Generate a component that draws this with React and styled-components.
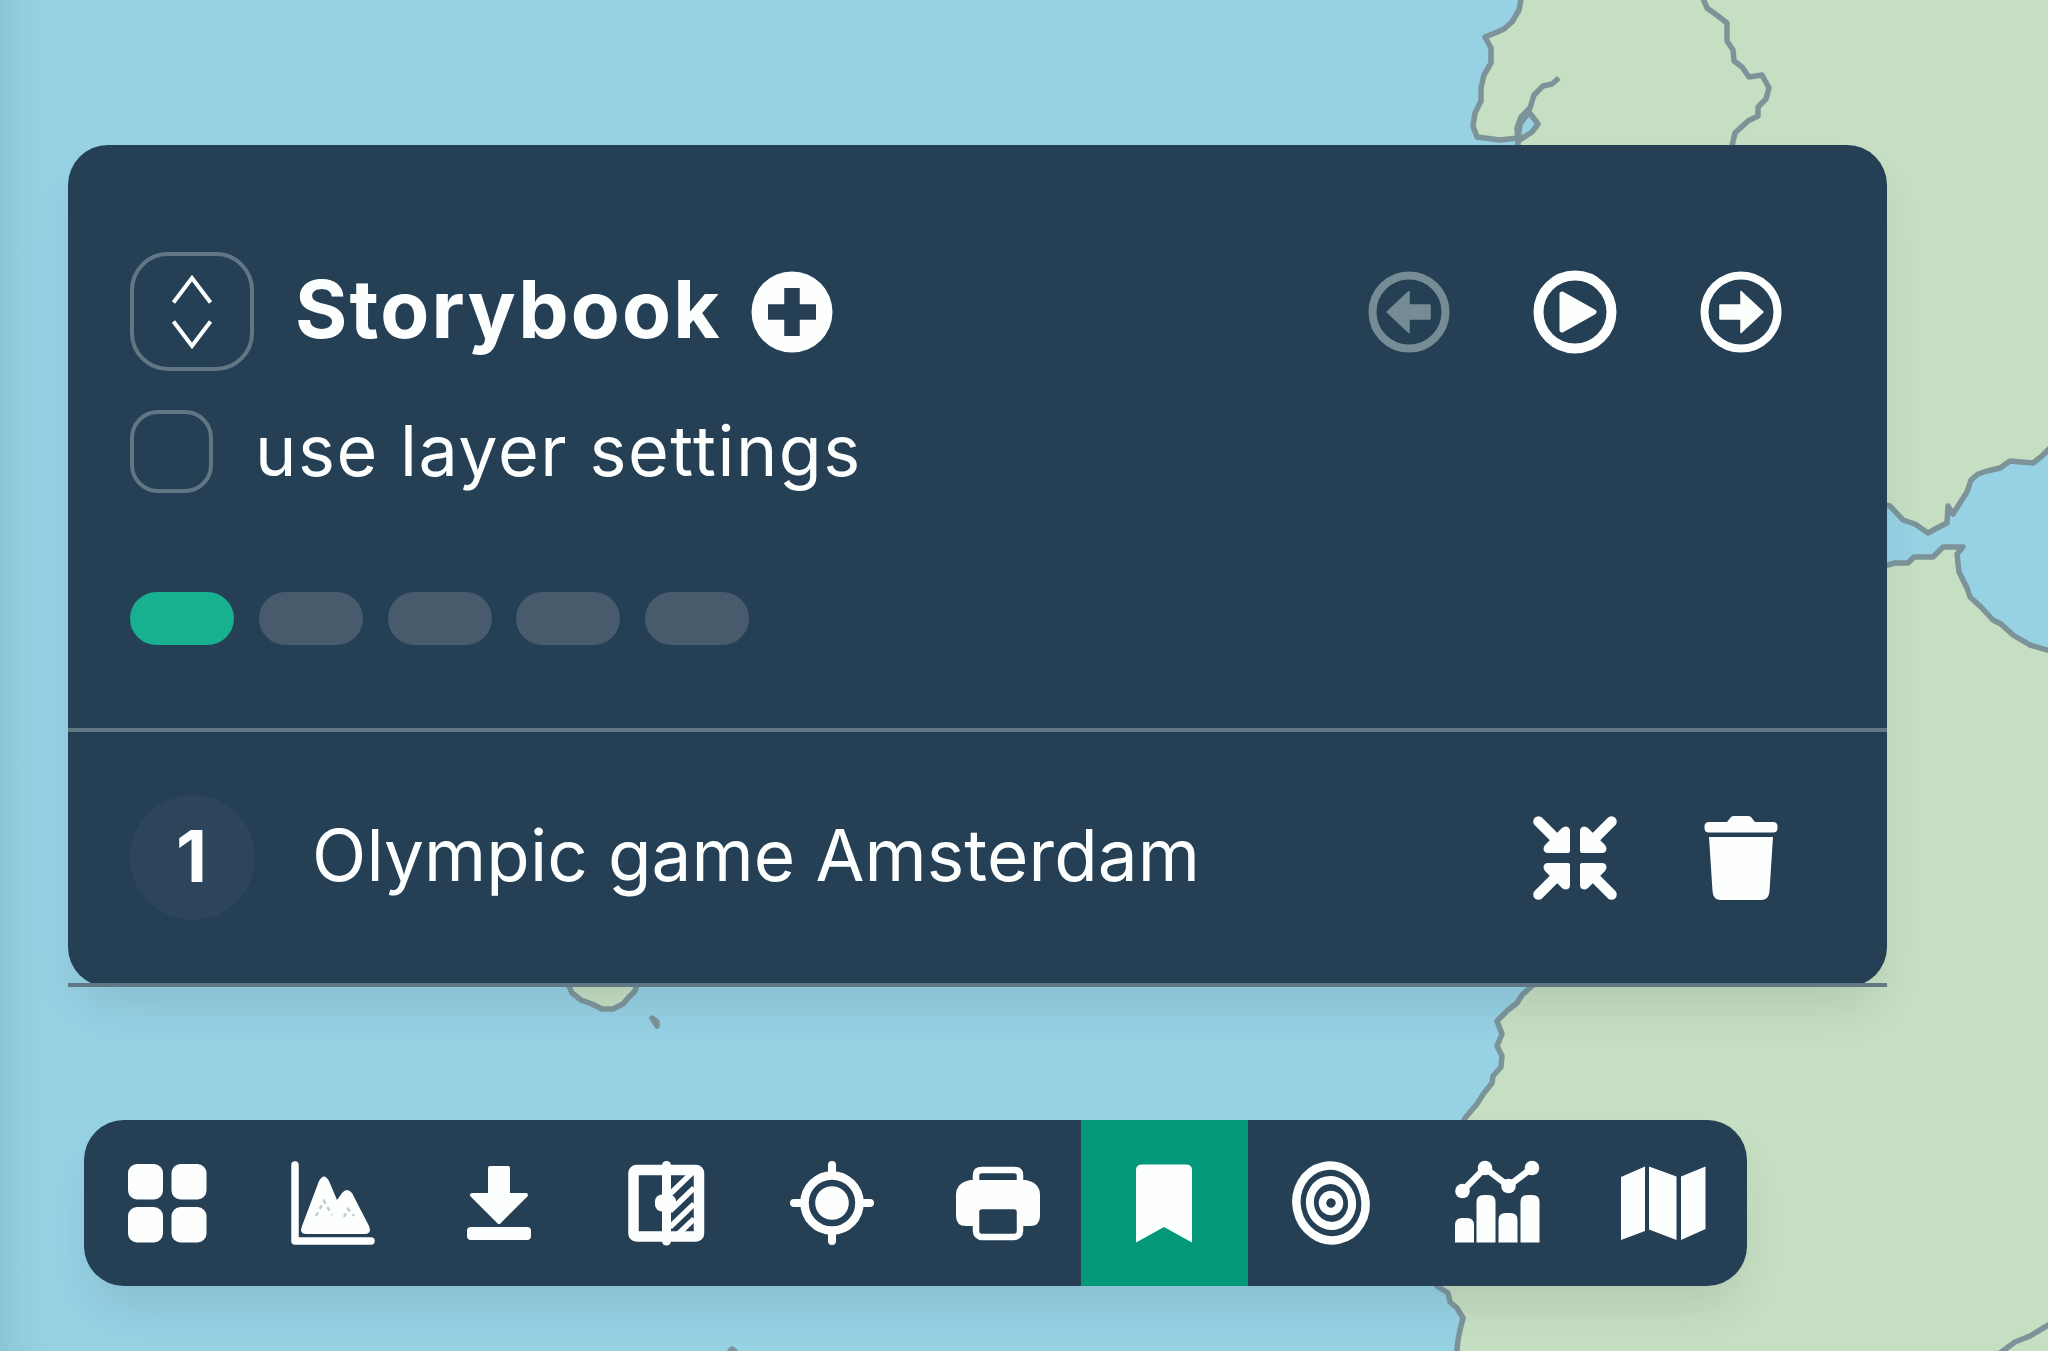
import React from "react"
import styled, { createGlobalStyle, css } from "styled-components"

/** COLORS **/
const NAVY = "#253f54"
const SEA = "#96d1e4"
const LAND = "#c6dec1"
const COAST = "#7c9499"
const LINE = "#627784"
const WHITE = "#fdffff"
const FADED = "#758c95"
const ACTIVE = "#04987b"
const STEP_ACTIVE = "#17b091"
const STEP = "#475b6c"
const BADGE = "#2d455b"

const SHADOW = "0 28px 44px -10px rgba(60, 90, 100, 0.15)"

const GlobalStyle = createGlobalStyle`
  html,
  body {
    margin: 0;
    padding: 0;
  }

  * {
    box-sizing: border-box;
  }
`

/** PAGE **/
const Page = styled.main`
  position: relative;
  display: flex;
  flex-direction: column;
  align-items: flex-start;
  gap: 132px;
  width: 2048px;
  height: 1351px;
  padding: 145px 0 0 68px;
  overflow: hidden;
  background-color: ${SEA};
  color: ${WHITE};
  font-family: Inter, "Liberation Sans", sans-serif;
`

const MapCanvas = styled.svg`
  position: absolute;
  inset: 0;
  width: 100%;
  height: 100%;
`

/** STORYBOOK PANEL **/
const Panel = styled.section`
  position: relative;
  width: 1819px;
  height: 842px;
  border-radius: 40px;
  background-color: ${NAVY};
  box-shadow: ${SHADOW};
`

const PanelHeader = styled.header`
  height: 587px;
  padding: 107px 104px 0 62px;
  border-bottom: 4px solid ${LINE};
`

const HeaderRow = styled.div`
  display: flex;
  align-items: center;
  height: 119px;
`

const IconButton = styled.button`
  display: flex;
  padding: 0;
  border: none;
  background: none;
  color: ${props => (props.$faded ? FADED : WHITE)};
`

const SortButton = styled.button`
  display: flex;
  justify-content: center;
  align-items: center;
  width: 124px;
  height: 119px;
  padding: 0;
  border: 4px solid ${LINE};
  border-radius: 38px;
  background: none;
  color: ${WHITE};
`

const Title = styled.h1`
  width: 424px;
  margin: 0 31px 0 41px;
  padding-bottom: 5px;
  font-size: 80px;
  font-weight: 700;
  line-height: 114px;
  letter-spacing: 2.2px;
  white-space: nowrap;
`

const Actions = styled.div`
  display: flex;
  align-items: center;
  gap: 82px;
  margin-left: auto;
`

const SettingRow = styled.label`
  display: flex;
  align-items: center;
  gap: 42px;
  height: 83px;
  margin-top: 39px;
`

const Checkbox = styled.input`
  appearance: none;
  width: 83px;
  height: 83px;
  margin: 0;
  border: 4px solid ${LINE};
  border-radius: 28px;
`

const SettingText = styled.span`
  padding-bottom: 2px;
  font-size: 70px;
  line-height: 83px;
  letter-spacing: 1.55px;
  white-space: nowrap;
`

const Steps = styled.div`
  display: flex;
  gap: 24.8px;
  margin-top: 99px;
`

const StepPill = styled.span`
  width: 104px;
  height: 53px;
  border-radius: 27px;
  background-color: ${props => (props.$active ? STEP_ACTIVE : STEP)};
`

const StoryRow = styled.div`
  display: flex;
  align-items: center;
  height: 255px;
  padding: 0 104px 0 62px;
  border-bottom: 4px solid ${LINE};
`

const Badge = styled.span`
  display: flex;
  justify-content: center;
  align-items: center;
  width: 125px;
  height: 125px;
  padding: 0 2px 5px 0;
  border-radius: 50%;
  background-color: ${BADGE};
  font-size: 72px;
  font-weight: 700;
`

const StoryName = styled.span`
  margin-left: 57px;
  padding-bottom: 6px;
  font-size: 71px;
  line-height: 90px;
  letter-spacing: 0.1px;
  white-space: nowrap;
`

/** TOOLBAR **/
const Toolbar = styled.nav`
  position: relative;
  display: flex;
  width: 1663px;
  height: 166px;
  margin: 1px 0 0 15.5px;
  border-radius: 40px;
  background-color: ${NAVY};
  box-shadow: ${SHADOW};
`

const ToolButton = styled.button`
  display: flex;
  flex: 1;
  justify-content: center;
  align-items: center;
  padding: 0;
  border: none;
  background: none;
  color: ${WHITE};

  ${props =>
    props.$active &&
    css`
      background-color: ${ACTIVE};
    `}
`

/** ICONS **/
const Icon = ({ size = 84, children }) => (
  <svg
    width={size}
    height={size}
    viewBox={`${-size / 2} ${-size / 2} ${size} ${size}`}
    fill="currentColor"
    overflow="visible"
  >
    {children}
  </svg>
)

const SortIcon = () => (
  <Icon>
    <path
      d="M-18.500-9.500L0-34L18.500-9.500M-18.500 9.500L0 34L18.500 9.500"
      fill="none"
      stroke="currentColor"
      strokeWidth="4"
    />
  </Icon>
)

const AddIcon = () => (
  <Icon>
    <circle r="40.500" />
    <path d="M-24 0H24M0-24V24" stroke={NAVY} strokeWidth="15.500" />
  </Icon>
)

const ArrowIcon = ({ flip }) => (
  <Icon>
    <circle r="36.500" fill="none" stroke="currentColor" strokeWidth="8" />
    <path
      d="M-21-7H0V-20.500L22 0L0 20.500V7H-21Z"
      transform={flip ? "scale(-1 1)" : undefined}
      stroke="currentColor"
      strokeWidth="1.500"
      strokeLinejoin="round"
    />
  </Icon>
)

const PlayIcon = () => (
  <Icon>
    <circle r="36.500" fill="none" stroke="currentColor" strokeWidth="10" />
    <path
      d="M-13-18L19 0L-13 18Z"
      stroke="currentColor"
      strokeWidth="5"
      strokeLinejoin="round"
    />
  </Icon>
)

const CORNERS = ["1 1", "-1 1", "1 -1", "-1 -1"]

const MinimizeIcon = () => (
  <Icon>
    {CORNERS.map(scale => (
      <g key={scale} transform={`scale(${scale})`}>
        <path d="M-5-7V-27Q-5-31-9-31.500Q-11-31.500-13-30L-17.500-25.500L-25.500-17.500L-30-13Q-31.500-11-31.500-9Q-31-5-27-5H-7Q-5-5-5-7Z" />
        <path
          d="M-36.500-36.500L-18-18"
          stroke="currentColor"
          strokeWidth="10.500"
          strokeLinecap="round"
        />
      </g>
    ))}
  </Icon>
)

const TrashIcon = () => (
  <Icon>
    <path d="M-14-36L-10-41Q-9-42-7-42H7Q9-42 10-41L14-36H32Q36.500-36 36.500-31.500V-30Q36.500-25.500 32-25.500H-32Q-36.500-25.500-36.500-30V-31.500Q-36.500-36-32-36Z" />
    <path d="M-32-21H32L28.500 33Q28 42 20 42H-20Q-28 42-28.500 33Z" />
  </Icon>
)

const GridIcon = () => (
  <Icon>
    <rect x="-39" y="-39" width="35" height="35.500" rx="9" />
    <rect x="4.500" y="-39" width="35" height="35.500" rx="9" />
    <rect x="-39" y="4" width="35" height="35.500" rx="9" />
    <rect x="4.500" y="4" width="35" height="35.500" rx="9" />
  </Icon>
)

const TerrainIcon = () => (
  <Icon>
    <path
      d="M-38-38V38H38"
      fill="none"
      stroke="currentColor"
      strokeWidth="7.500"
      strokeLinecap="round"
      strokeLinejoin="round"
    />
    <path d="M-31 23L-14-22Q-9-31-4-22L4-3L9-10Q14-16 19-10L36 23Q39 31 32 31H-27Q-34 31-31 23Z" />
    <path
      d="M-17 13L-9-2L-1 12M11 14L15 6L21 13"
      fill="none"
      stroke="#bccbce"
      strokeWidth="2.500"
      strokeDasharray="4 4"
    />
  </Icon>
)

const DownloadIcon = () => (
  <Icon>
    <path
      d="M-9-35H9V-8H27L0 19L-27-8H-9Z"
      stroke="currentColor"
      strokeWidth="4"
      strokeLinejoin="round"
    />
    <rect x="-32" y="24" width="64" height="13" rx="4" />
  </Icon>
)

const CompareIcon = () => (
  <Icon>
    <rect
      x="-32.500"
      y="-33"
      width="65.500"
      height="66.500"
      rx="3"
      fill="none"
      stroke="currentColor"
      strokeWidth="10.500"
    />
    <rect x="-4" y="-42" width="9" height="84.500" rx="4.500" />
    <rect x="-11" y="-8.500" width="21" height="17" rx="7" />
    <path
      d="M4-9L28-32M4 8L28-15M4 24L28 1M8 35L28 16"
      stroke="currentColor"
      strokeWidth="5.500"
    />
  </Icon>
)

const LocateIcon = () => (
  <Icon>
    <circle r="27.500" fill="none" stroke="currentColor" strokeWidth="8.500" />
    <circle r="16.800" />
    <path
      d="M0-38V-30M0 38V30M-38 0H-30M38 0H30"
      stroke="currentColor"
      strokeWidth="8"
      strokeLinecap="round"
    />
  </Icon>
)

const PrintIcon = () => (
  <Icon>
    <path
      d="M-22-20V-28Q-22-33-16-33H16Q22-33 22-28V-20"
      fill="none"
      stroke="currentColor"
      strokeWidth="6.500"
    />
    <path d="M-28-23H28Q42-20 42-8V13Q42 23 32 23H-32Q-42 23-42 13V-8Q-42-20-28-23Z" />
    <rect
      x="-22"
      y="3"
      width="44"
      height="31"
      rx="6"
      fill={NAVY}
      stroke="currentColor"
      strokeWidth="6.500"
    />
  </Icon>
)

const BookmarkIcon = () => (
  <Icon>
    <path d="M-28-33Q-28-38.500-22-38.500H22Q28-38.500 28-33V39.500L0 24L-28 39.500Z" />
  </Icon>
)

const TargetIcon = () => (
  <Icon>
    <g transform="rotate(-12)" fill="none" stroke="currentColor">
      <ellipse rx="34.500" ry="37.500" strokeWidth="8.500" />
      <ellipse rx="21" ry="23" strokeWidth="8" />
      <circle r="8.500" strokeWidth="7.500" />
    </g>
  </Icon>
)

const TREND_POINTS = [
  [-34.5, -12],
  [-12, -35],
  [11.5, -17],
  [35, -35],
]

const ChartIcon = () => (
  <Icon>
    <path
      d="M-34.500-12L-12-35L11.500-17L35-35"
      fill="none"
      stroke="currentColor"
      strokeWidth="6.500"
    />
    {TREND_POINTS.map(([x, y]) => (
      <circle key={x} cx={x} cy={y} r="7.300" />
    ))}
    <path d="M-42 39.500V22Q-42 15-35 15H-30Q-23 15-23 22V39.500Z" />
    <path d="M-20.500 39.500V-1Q-20.500-8-13.500-8H-8.500Q-1.500-8-1.500-1V39.500Z" />
    <path d="M1.500 39.500V17Q1.500 10 8.500 10H13.500Q20.500 10 20.500 17V39.500Z" />
    <path d="M23.500 39.500V-1Q23.500-8 30.500-8H35.500Q42.500-8 42.500-1V39.500Z" />
  </Icon>
)

const MapIcon = () => (
  <Icon>
    <path d="M-42-26L-18-36.500V28L-42 37Z" />
    <path d="M-14-36.500L13.500-26.500V37L-14 26.500Z" />
    <path d="M18-26.500L42.500-36.500V26L18 37Z" />
  </Icon>
)

/** MAP **/
const EUROPE =
  "M1522-6L1519 10L1512 22L1504 29L1495 33L1485 37L1491 48L1491 63L1484 75L1481 88L1481 101L1475 113L1473 126L1477 137L1500 140L1518 138L1518 160V520H1870V502L1890 506L1903 520L1915 524L1928 533L1939 527L1947 523L1948 506L1953 514L1958 506L1967 492L1971 480L1978 474L1987 471L2000 468L2010 461L2033 463L2042 456L2054 444V-6Z"
const AFRICA =
  "M1880 567L1895 563L1908 563L1914 557L1933 557L1943 547L1963 547L1957 554L1959 572L1967 588L1970 597L1981 607L1993 620L2001 624L2013 635L2030 645L2054 652V1360H1456L1458 1340L1460 1330L1463 1318L1457 1308L1450 1302L1448 1293L1437 1286L1430 1200L1465 1118L1477 1104L1484 1093L1492 1083L1493 1076L1501 1067L1502 1056L1497 1046L1502 1034L1497 1021L1508 1010L1517 1003L1522 995L1532 986L1700 700Z"
const BORDERS = [
  "M1702-4L1707 8L1718 16L1727 23L1727 41L1733 50L1734 61L1742 67L1749 77L1762 75L1769 88L1766 99L1758 107L1758 116L1748 121L1735 133L1731 150",
  "M1559 78L1552 84L1543 86L1534 95L1530 108L1521 117L1517 128L1518 140",
  "M2000 1353L2015 1342L2030 1336L2050 1324",
]

const MapBackground = () => (
  <MapCanvas viewBox="0 0 2048 1351">
    <defs>
      <linearGradient id="edge" x1="0" x2="1">
        <stop offset="0" stopColor="#84bfd0" stopOpacity="0.6" />
        <stop offset="0.4" stopColor="#8ac6d8" stopOpacity="0.35" />
        <stop offset="1" stopColor={SEA} stopOpacity="0" />
      </linearGradient>
    </defs>
    <g stroke={COAST} strokeWidth="5.500" strokeLinejoin="round">
      <path d={EUROPE} fill={LAND} />
      <path d={AFRICA} fill={LAND} />
      <path d="M1529 112L1538 124L1532 132L1518 141L1520 124Z" fill={SEA} />
      <path
        d="M568 984L572 993L581 1000L592 1004L602 1009L613 1009L623 1004L629 997L635 991L637 984Z"
        fill={LAND}
      />
      <path d="M652 1018L657 1022L657 1026Z" fill={COAST} />
      <path d="M729 1352L732 1349L736 1352" fill={COAST} />
      {BORDERS.map(d => (
        <path key={d} d={d} fill="none" />
      ))}
    </g>
    <rect width="60" height="1351" fill="url(#edge)" />
  </MapCanvas>
)

const STEPS = [1, 2, 3, 4, 5]

const TOOLS = [
  { name: "Layers", icon: GridIcon },
  { name: "Elevation profile", icon: TerrainIcon },
  { name: "Download", icon: DownloadIcon },
  { name: "Compare", icon: CompareIcon },
  { name: "Locate", icon: LocateIcon },
  { name: "Print", icon: PrintIcon },
  { name: "Storybook", icon: BookmarkIcon, active: true },
  { name: "Target", icon: TargetIcon },
  { name: "Statistics", icon: ChartIcon },
  { name: "Base map", icon: MapIcon },
]

const App = () => (
  <>
    <GlobalStyle />
    <Page>
      <MapBackground />
      <Panel>
        <PanelHeader>
          <HeaderRow>
            <SortButton aria-label="Sort">
              <SortIcon />
            </SortButton>
            <Title>Storybook</Title>
            <IconButton aria-label="Add">
              <AddIcon />
            </IconButton>
            <Actions>
              <IconButton aria-label="Previous" $faded>
                <ArrowIcon flip />
              </IconButton>
              <IconButton aria-label="Play">
                <PlayIcon />
              </IconButton>
              <IconButton aria-label="Next">
                <ArrowIcon />
              </IconButton>
            </Actions>
          </HeaderRow>
          <SettingRow>
            <Checkbox type="checkbox" />
            <SettingText>use layer settings</SettingText>
          </SettingRow>
          <Steps>
            {STEPS.map(step => (
              <StepPill key={step} $active={step === 1} />
            ))}
          </Steps>
        </PanelHeader>
        <StoryRow>
          <Badge>1</Badge>
          <StoryName>Olympic game Amsterdam</StoryName>
          <Actions>
            <IconButton aria-label="Zoom to story">
              <MinimizeIcon />
            </IconButton>
            <IconButton aria-label="Delete">
              <TrashIcon />
            </IconButton>
          </Actions>
        </StoryRow>
      </Panel>
      <Toolbar>
        {TOOLS.map(({ name, icon: ToolIcon, active }) => (
          <ToolButton key={name} aria-label={name} $active={active}>
            <ToolIcon />
          </ToolButton>
        ))}
      </Toolbar>
    </Page>
  </>
)

export default App
